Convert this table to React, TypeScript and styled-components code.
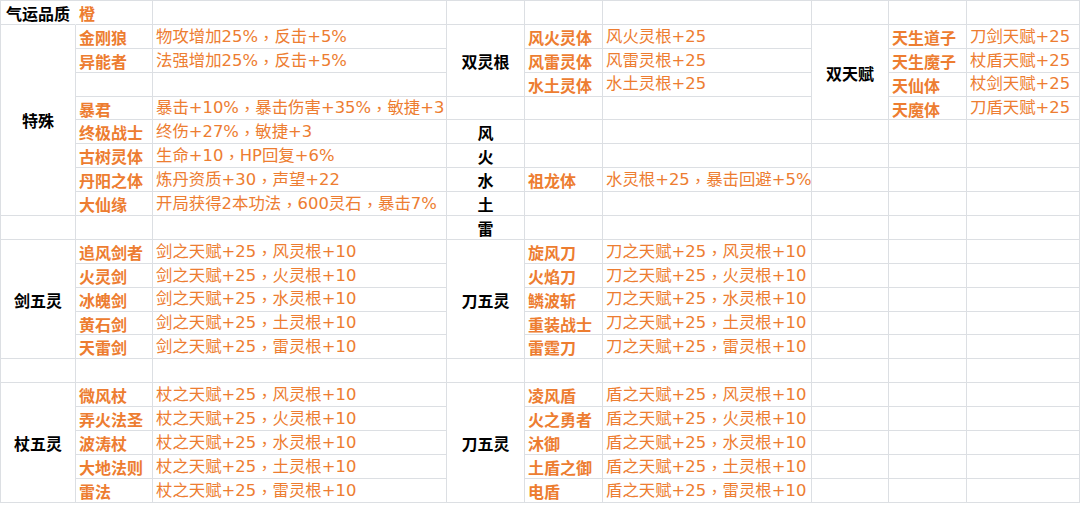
import React from "react";
import styled, { createGlobalStyle } from "styled-components";

const GlobalStyle = createGlobalStyle`
  html, body { margin: 0; padding: 0; background: #ffffff; }
  body { font-family: "Noto Sans CJK SC", sans-serif; }
`;

const COLS = [76, 77, 294, 78, 78, 209, 77, 78, 113];
const ROWS = 21;
const LINE = "#dcdfe3";
const ORANGE = "#ED7D31";

const Sheet = styled.div`
  display: grid;
  grid-template-columns: ${COLS.map((c) => `${c}px`).join(" ")};
  grid-auto-rows: 23.9px;
  width: 1080px;
  border-top: 1px solid ${LINE};
  box-sizing: border-box;
  overflow: hidden;
`;

type Tone = "head" | "name" | "desc" | "empty";

const Cell = styled.div<{
  $r: number;
  $c: number;
  $rs: number;
  $tone: Tone;
  $open?: boolean;
}>`
  grid-row: ${(p) => p.$r + 1} / span ${(p) => p.$rs};
  grid-column: ${(p) => p.$c + 1};
  display: flex;
  align-items: center;
  justify-content: ${(p) => (p.$tone === "head" ? "center" : "flex-start")};
  padding-left: ${(p) => (p.$tone === "head" ? "0" : "3px")};
  padding-top: 1px;
  box-sizing: border-box;
  border-right: 1px solid ${(p) => (p.$open ? "transparent" : LINE)};
  border-bottom: 1px solid ${LINE};
  border-left: ${(p) => (p.$c === 0 ? `1px solid ${LINE}` : "none")};
  white-space: nowrap;
  overflow: visible;
  font-size: ${(p) => (p.$tone === "desc" ? "16.4px" : "16px")};
  line-height: 1;
  font-family: ${(p) =>
    p.$tone === "desc"
      ? `"DejaVu Sans", "Noto Sans CJK SC", sans-serif`
      : `"Noto Sans CJK SC", sans-serif`};
  font-weight: ${(p) => (p.$tone === "desc" ? 400 : 700)};
  color: ${(p) => (p.$tone === "head" ? "#000000" : ORANGE)};
`;

/* centred full-width comma, as the spreadsheet font draws it */
const Comma = styled.span`
  font-family: "Noto Sans CJK TC", "Noto Sans CJK SC", sans-serif;
`;

type CellDef = {
  r: number;
  c: number;
  rs?: number;
  text: string;
  tone: Tone;
  open?: boolean;
};

const cells: CellDef[] = [];
const add = (r: number, c: number, text: string, tone: Tone, rs = 1, open = false) =>
  cells.push({ r, c, text, tone, rs, open });

const pairs = (startRow: number, col: number, items: [string, string][]) =>
  items.forEach(([n, d], i) => {
    if (!n && !d) return;
    add(startRow + i, col, n, "name");
    add(startRow + i, col + 1, d, "desc");
  });

add(0, 0, "气运品质", "head", 1, true);
add(0, 1, "橙", "name");

add(1, 0, "特殊", "head", 8);
pairs(1, 1, [
  ["金刚狼", "物攻增加25%，反击+5%"],
  ["异能者", "法强增加25%，反击+5%"],
  ["", ""],
  ["暴君", "暴击+10%，暴击伤害+35%，敏捷+3"],
  ["终极战士", "终伤+27%，敏捷+3"],
  ["古树灵体", "生命+10，HP回复+6%"],
  ["丹阳之体", "炼丹资质+30，声望+22"],
  ["大仙缘", "开局获得2本功法，600灵石，暴击7%"],
]);

add(1, 3, "双灵根", "head", 3);
pairs(1, 4, [
  ["风火灵体", "风火灵根+25"],
  ["风雷灵体", "风雷灵根+25"],
  ["水土灵体", "水土灵根+25"],
]);

["风", "火", "水", "土", "雷"].forEach((t, i) => add(5 + i, 3, t, "head"));
pairs(7, 4, [["祖龙体", "水灵根+25，暴击回避+5%"]]);

add(1, 6, "双天赋", "head", 4);
pairs(1, 7, [
  ["天生道子", "刀剑天赋+25"],
  ["天生魔子", "杖盾天赋+25"],
  ["天仙体", "杖剑天赋+25"],
  ["天魔体", "刀盾天赋+25"],
]);

const elems = ["风", "火", "水", "土", "雷"];
const five = (prefix: string, names: string[]): [string, string][] =>
  names.map((n, i) => [n, `${prefix}之天赋+25，${elems[i]}灵根+10`]);

add(10, 0, "剑五灵", "head", 5);
pairs(10, 1, five("剑", ["追风剑者", "火灵剑", "冰魄剑", "黄石剑", "天雷剑"]));

add(10, 3, "刀五灵", "head", 5);
pairs(10, 4, five("刀", ["旋风刀", "火焰刀", "鳞波斩", "重装战士", "雷霆刀"]));

add(16, 0, "杖五灵", "head", 5);
pairs(16, 1, five("杖", ["微风杖", "弄火法圣", "波涛杖", "大地法则", "雷法"]));

add(16, 3, "刀五灵", "head", 5);
pairs(16, 4, five("盾", ["凌风盾", "火之勇者", "沐御", "土盾之御", "电盾"]));

// fill empty cells
const taken: boolean[][] = Array.from({ length: ROWS }, () => COLS.map(() => false));
cells.forEach((c) => {
  for (let k = 0; k < (c.rs ?? 1); k++) taken[c.r + k][c.c] = true;
});
for (let r = 0; r < ROWS; r++) {
  for (let c = 0; c < COLS.length; c++) {
    if (!taken[r][c]) cells.push({ r, c, rs: 1, text: "", tone: "empty" });
  }
}

const renderText = (text: string) => {
  const parts = text.split("，");
  return parts.map((p, i) => (
    <React.Fragment key={i}>
      {p}
      {i < parts.length - 1 && <Comma>，</Comma>}
    </React.Fragment>
  ));
};

export default function App() {
  return (
    <>
      <GlobalStyle />
      <Sheet>
        {cells.map((c) => (
          <Cell
            key={`${c.r}-${c.c}`}
            $r={c.r}
            $c={c.c}
            $rs={c.rs ?? 1}
            $tone={c.tone}
            $open={c.open}
          >
            {renderText(c.text)}
          </Cell>
        ))}
      </Sheet>
    </>
  );
}
